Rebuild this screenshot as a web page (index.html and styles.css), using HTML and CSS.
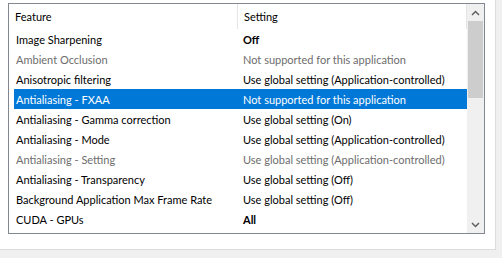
FILE: index.html
```html
<!DOCTYPE html>
<html lang="en">
<head>
    <meta charset="UTF-8">
    <title>Program Settings</title>
    <link rel="stylesheet" href="styles.css">
</head>
<body>
    <div class="panel">
        <div class="listview">
            <div class="view">
                <div class="header">
                    <div class="hcell feature">Feature</div>
                    <div class="hcell setting">Setting</div>
                </div>
                <div class="rows">
                    <div class="row"><span class="col1">Image Sharpening</span><span class="col2 bold">Off</span></div>
                    <div class="row disabled"><span class="col1">Ambient Occlusion</span><span class="col2">Not supported for this application</span></div>
                    <div class="row"><span class="col1">Anisotropic filtering</span><span class="col2">Use global setting (Application-controlled)</span></div>
                    <div class="row selected"><span class="col1">Antialiasing - FXAA</span><span class="col2">Not supported for this application</span></div>
                    <div class="row"><span class="col1">Antialiasing - Gamma correction</span><span class="col2">Use global setting (On)</span></div>
                    <div class="row"><span class="col1">Antialiasing - Mode</span><span class="col2">Use global setting (Application-controlled)</span></div>
                    <div class="row disabled"><span class="col1">Antialiasing - Setting</span><span class="col2">Use global setting (Application-controlled)</span></div>
                    <div class="row"><span class="col1">Antialiasing - Transparency</span><span class="col2">Use global setting (Off)</span></div>
                    <div class="row"><span class="col1">Background Application Max Frame Rate</span><span class="col2">Use global setting (Off)</span></div>
                    <div class="row"><span class="col1">CUDA - GPUs</span><span class="col2 bold">All</span></div>
                </div>
            </div>
            <div class="scrollbar">
                <div class="arrow">
                    <svg width="9" height="6" viewBox="0 0 9 6"><path d="M1 5 L4.5 1.5 L8 5" fill="none" stroke="#606060" stroke-width="1.5"/></svg>
                </div>
                <div class="track">
                    <div class="thumb"></div>
                </div>
                <div class="arrow">
                    <svg width="9" height="6" viewBox="0 0 9 6"><path d="M1 1 L4.5 4.5 L8 1" fill="none" stroke="#606060" stroke-width="1.5"/></svg>
                </div>
            </div>
        </div>
    </div>
</body>
</html>
```

FILE: styles.css
```css
body {
    margin: 0;
    background: #f0f0f0;
    font-family: Lato, "Noto Sans", sans-serif;
    font-size: 11px;
    color: #000;
}
.panel {
    width: 487px;
    height: 246px;
    padding: 3px 0 0 8px;
    background: #fff;
    border-right: 1px solid #dcdcdc;
    border-bottom: 1px solid #dcdcdc;
}
.listview {
    display: flex;
    width: 475px;
    height: 229px;
    border: 1px solid #828790;
}
.view {
    flex: 1;
    min-width: 0;
    display: flex;
    flex-direction: column;
}
.header {
    display: flex;
    height: 25px;
}
.hcell {
    display: flex;
    align-items: center;
    padding-left: 6px;
    border-right: 1px solid #e5e5e5;
    box-sizing: border-box;
}
.hcell.feature {
    width: 229px;
}
.hcell.setting {
    flex: 1;
}
.rows {
    padding-left: 5px;
}
.row {
    display: flex;
    align-items: center;
    height: 20px;
    white-space: nowrap;
    overflow: hidden;
}
.col1 {
    flex: none;
    width: 221px;
    padding-left: 2px;
    overflow: hidden;
}
.col2 {
    padding-left: 6px;
}
.bold {
    font-weight: bold;
}
.disabled {
    color: #6d6d6d;
}
.selected {
    background: #0078d7;
    color: #fff;
}
/* Scrollbar */
.scrollbar {
    flex: none;
    width: 17px;
    display: flex;
    flex-direction: column;
    background: #f0f0f0;
}
.arrow {
    height: 17px;
    display: flex;
    align-items: center;
    justify-content: center;
}
.track {
    flex: 1;
}
.thumb {
    height: 77px;
    margin: 0 1px;
    background: #cdcdcd;
}
```
